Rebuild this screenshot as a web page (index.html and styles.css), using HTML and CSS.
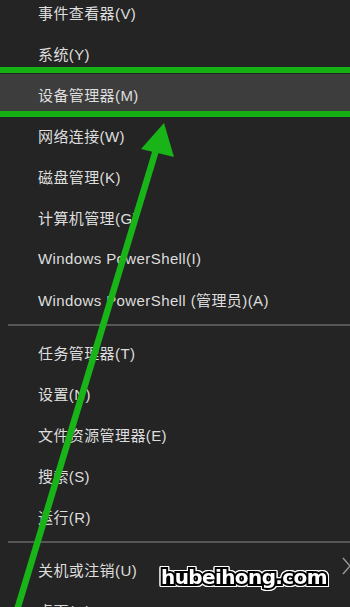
FILE: index.html
```html
<!DOCTYPE html>
<html lang="zh-CN">
<head>
<meta charset="utf-8">
<title>Win+X 菜单</title>
<link rel="stylesheet" href="styles.css">
</head>
<body>
<div class="menu">
  <div class="item">事件查看器(V)</div>
  <div class="item">系统(Y)</div>
  <div class="item hl">设备管理器(M)</div>
  <div class="item">网络连接(W)</div>
  <div class="item">磁盘管理(K)</div>
  <div class="item">计算机管理(G)</div>
  <div class="item">Windows PowerShell(I)</div>
  <div class="item">Windows PowerShell (管理员)(A)</div>
  <div class="sep"></div>
  <div class="item">任务管理器(T)</div>
  <div class="item">设置(N)</div>
  <div class="item">文件资源管理器(E)</div>
  <div class="item">搜索(S)</div>
  <div class="item">运行(R)</div>
  <div class="sep"></div>
  <div class="item sub"><span>关机或注销(U)</span><svg class="chev" width="10" height="18" viewBox="0 0 10 18"><path d="M1 1 L8 9 L1 17" fill="none" stroke="#9a9a9a" stroke-width="1.4"/></svg></div>
  <div class="item">桌面(D)</div>
</div>
<div class="box"></div>
<svg class="arrow" width="350" height="607" viewBox="0 0 350 607">
  <line x1="14" y1="620" x2="156" y2="150" stroke="#18b418" stroke-width="6.5"/>
  <polygon points="164,123 141,149 174,157" fill="#18b418"/>
</svg>
<div class="wm">hubeihong.com</div>
</body>
</html>
```

FILE: styles.css
```css
html, body {
  margin: 0;
  padding: 0;
  background: #242424;
  width: 350px;
  height: 607px;
  overflow: hidden;
  position: relative;
}
.menu {
  margin-top: -8px;
  display: flex;
  flex-direction: column;
  font-family: "Liberation Sans", "Noto Sans CJK SC", sans-serif;
  font-size: 15px;
  letter-spacing: 0.4px;
  color: #dedede;
}
.item {
  height: 41px;
  padding-left: 38px;
  display: flex;
  align-items: center;
  white-space: nowrap;
}
.item.hl {
  background: #3d3d3d;
}
.item.sub {
  justify-content: space-between;
  padding-right: 0;
}
.chev {
  margin-right: -2px;
  margin-top: -8px;
}
.sep {
  height: 12px;
  display: flex;
  align-items: flex-start;
  padding-left: 8px;
}
.sep::before {
  content: "";
  display: block;
  margin-top: 4px;
  height: 2px;
  flex: 1;
  background: #565656;
}
.box {
  position: absolute;
  left: 0;
  top: 67px;
  width: 350px;
  height: 38px;
  border-top: 6px solid #14b014;
  border-bottom: 6px solid #14b014;
}
.arrow {
  position: absolute;
  left: 0;
  top: 0;
}
.wm {
  position: absolute;
  left: 161px;
  top: 565px;
  font-family: "DejaVu Sans", sans-serif;
  font-weight: bold;
  font-size: 20px;
  letter-spacing: -0.6px;
  color: #ffffff;
  -webkit-text-stroke: 4px #000000;
  paint-order: stroke fill;
  filter: drop-shadow(1px 0 0 #fff) drop-shadow(-1px 0 0 #fff) drop-shadow(0 1px 0 #fff) drop-shadow(0 -1px 0 #fff);
}
```
